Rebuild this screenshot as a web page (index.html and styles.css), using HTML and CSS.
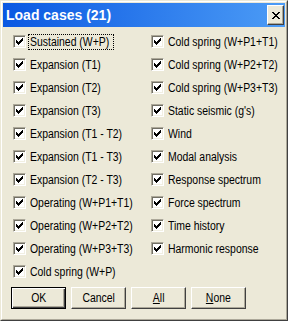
FILE: index.html
```html
<!DOCTYPE html>
<html lang="en">
<head>
    <meta charset="UTF-8">
    <title>Load cases</title>
    <link rel="stylesheet" href="styles.css">
</head>
<body>
    <div class="window">
        <div class="frame">
            <div class="titlebar">
                <span class="title">Load cases (21)</span>
                <button class="close-btn" aria-label="Close">
                    <svg width="8" height="7" viewBox="0 0 8 7" shape-rendering="crispEdges">
                        <path d="M0 0h2v1h-2zM6 0h2v1h-2zM1 1h2v1h-2zM5 1h2v1h-2zM2 2h4v1h-4zM3 3h2v1h-2zM2 4h4v1h-4zM1 5h2v1h-2zM5 5h2v1h-2zM0 6h2v1h-2zM6 6h2v1h-2z" fill="#000"/>
                    </svg>
                </button>
            </div>

            <div class="cases">
                <div class="column">
                    <label class="case"><span class="box"></span><span class="text focused"><span class="label">Sustained (W+P)</span></span></label>
                    <label class="case"><span class="box"></span><span class="text"><span class="label">Expansion (T1)</span></span></label>
                    <label class="case"><span class="box"></span><span class="text"><span class="label">Expansion (T2)</span></span></label>
                    <label class="case"><span class="box"></span><span class="text"><span class="label">Expansion (T3)</span></span></label>
                    <label class="case"><span class="box"></span><span class="text"><span class="label">Expansion (T1 - T2)</span></span></label>
                    <label class="case"><span class="box"></span><span class="text"><span class="label">Expansion (T1 - T3)</span></span></label>
                    <label class="case"><span class="box"></span><span class="text"><span class="label">Expansion (T2 - T3)</span></span></label>
                    <label class="case"><span class="box"></span><span class="text"><span class="label">Operating (W+P1+T1)</span></span></label>
                    <label class="case"><span class="box"></span><span class="text"><span class="label">Operating (W+P2+T2)</span></span></label>
                    <label class="case"><span class="box"></span><span class="text"><span class="label">Operating (W+P3+T3)</span></span></label>
                    <label class="case"><span class="box"></span><span class="text"><span class="label">Cold spring (W+P)</span></span></label>
                </div>
                <div class="column">
                    <label class="case"><span class="box"></span><span class="text"><span class="label">Cold spring (W+P1+T1)</span></span></label>
                    <label class="case"><span class="box"></span><span class="text"><span class="label">Cold spring (W+P2+T2)</span></span></label>
                    <label class="case"><span class="box"></span><span class="text"><span class="label">Cold spring (W+P3+T3)</span></span></label>
                    <label class="case"><span class="box"></span><span class="text"><span class="label">Static seismic (g's)</span></span></label>
                    <label class="case"><span class="box"></span><span class="text"><span class="label">Wind</span></span></label>
                    <label class="case"><span class="box"></span><span class="text"><span class="label">Modal analysis</span></span></label>
                    <label class="case"><span class="box"></span><span class="text"><span class="label">Response spectrum</span></span></label>
                    <label class="case"><span class="box"></span><span class="text"><span class="label">Force spectrum</span></span></label>
                    <label class="case"><span class="box"></span><span class="text"><span class="label">Time history</span></span></label>
                    <label class="case"><span class="box"></span><span class="text"><span class="label">Harmonic response</span></span></label>
                </div>
            </div>

            <div class="buttons">
                <button class="btn default"><span class="label">OK</span></button>
                <button class="btn"><span class="label">Cancel</span></button>
                <button class="btn"><span class="label"><u>A</u>ll</span></button>
                <button class="btn"><span class="label"><u>N</u>one</span></button>
            </div>
        </div>
    </div>

    <script>
        // draw the check mark into every box
        var check = '<svg width="7" height="7" viewBox="0 0 7 7" shape-rendering="crispEdges">' +
            '<path d="M0 2h1v3h-1zM1 3h1v3h-1zM2 4h1v3h-1zM3 3h1v3h-1zM4 2h1v3h-1zM5 1h1v3h-1zM6 0h1v3h-1z" fill="#000"/></svg>';
        document.querySelectorAll('.box').forEach(function (box) {
            box.innerHTML = check;
        });
    </script>
</body>
</html>
```

FILE: styles.css
```css
* {
    margin: 0;
    padding: 0;
    box-sizing: border-box;
}

body {
    background: #ece9d8;
    font-family: 'Liberation Sans', Arial, sans-serif;
    font-size: 12px;
    color: #000;
}

.window {
    width: 288px;
    height: 321px;
    overflow: hidden;
    border: 1px solid;
    border-color: #ece9d8 #404040 #404040 #ece9d8;
}

.frame {
    height: 100%;
    border: 1px solid;
    border-color: #fff #aca899 #aca899 #fff;
    padding: 1px;
    display: flex;
    flex-direction: column;
}

.titlebar {
    height: 24px;
    flex-shrink: 0;
    display: flex;
    align-items: center;
    justify-content: space-between;
    padding: 0 1px 0 3px;
    background: linear-gradient(to right, #0a58e2, #4c9cf6);
}

.title {
    font-weight: bold;
    font-size: 14px;
    color: #fff;
}

.close-btn {
    width: 17px;
    height: 20px;
    background: #ece9d8;
    border: 1px solid;
    border-color: #fff #404040 #404040 #fff;
    box-shadow: inset -1px -1px #aca899;
    display: flex;
    align-items: center;
    justify-content: center;
}

.cases {
    display: grid;
    grid-template-columns: 138px 1fr;
    padding: 3px 0 0 10px;
}

.column {
    display: flex;
    flex-direction: column;
}

.case {
    height: 23px;
    display: flex;
    align-items: center;
    gap: 2px;
    white-space: nowrap;
}

.box {
    width: 13px;
    height: 13px;
    flex-shrink: 0;
    background: #fff;
    border: 1px solid;
    border-color: #aca899 #fff #fff #aca899;
    box-shadow: inset 1px 1px #716f64, inset -1px -1px #f1efe2;
    display: flex;
    padding: 2px 0 0 2px;
}

.box svg {
    display: block;
}

.text {
    height: 16px;
    padding: 1px 1px 0;
    border: 1px solid transparent;
    line-height: 13px;
}

.text.focused {
    width: 86px;
    border: 1px dotted #000;
}

/* the dialog font is narrower than any installed family */
.label {
    display: inline-block;
    transform: scaleX(0.87);
    transform-origin: left center;
}

.buttons {
    display: flex;
    gap: 5px;
    padding: 4px 0 0 8px;
}

.btn {
    width: 55px;
    height: 22px;
    font: inherit;
    color: #000;
    background: #ece9d8;
    border: 1px solid;
    border-color: #fff #404040 #404040 #fff;
    box-shadow: inset -1px -1px #aca899;
}

.btn .label {
    transform-origin: center;
}

.btn.default {
    border-color: #000;
    box-shadow: inset 1px 1px #fff, inset -1px -1px #404040, inset -2px -2px #aca899;
}
```
